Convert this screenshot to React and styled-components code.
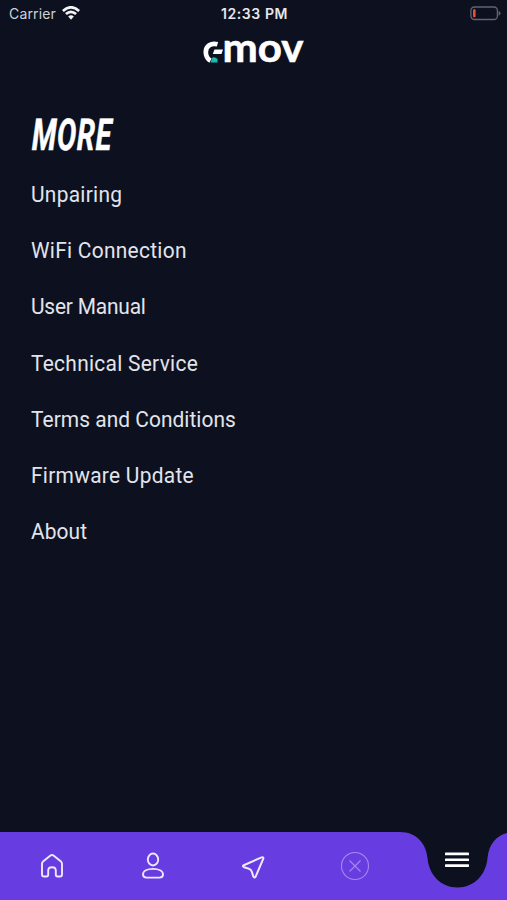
import React from 'react';
import styled, { createGlobalStyle } from 'styled-components';

const GlobalStyle = createGlobalStyle`
    * {
        box-sizing: border-box;
    }

    body {
        margin: 0;
        background: #0d111f;
    }
`;

const Screen = styled.div`
    display: flex;
    flex-direction: column;
    width: 100%;
    height: 100vh;
    overflow: hidden;
    background: #0d111f;
    color: #e2e4ec;
    font-family: Roboto, "Liberation Sans", sans-serif;
`;

const StatusBar = styled.div`
    display: grid;
    grid-template-columns: 1fr auto 1fr;
    align-items: center;
    height: 26px;
    padding: 0 6px 0 9px;
    font-family: Inter, "Liberation Sans", sans-serif;
`;

const Carrier = styled.div`
    display: flex;
    align-items: center;
    gap: 6px;
    font-size: 14px;
    letter-spacing: 0.15px;
    color: #cfd1d8;
`;

const Time = styled.div`
    margin-right: 1px;
    font-size: 14px;
    font-weight: 600;
    letter-spacing: 0.6px;
    color: #e6e7ec;
`;

const Battery = styled.svg`
    justify-self: end;
`;

const Header = styled.header`
    display: flex;
    justify-content: center;
    height: 50px;
`;

const LogoMark = styled.svg`
    overflow: visible;
`;

const Wordmark = styled.text`
    font-family: Lato, sans-serif;
    font-weight: 700;
    font-size: 41px;
    fill: #fff;
    stroke: #fff;
    stroke-width: 0.6px;
`;

const Main = styled.main`
    flex: 1;
    padding: 33px 31px 0;
`;

const Title = styled.h1`
    width: max-content;
    margin: 0;
    font-size: 44px;
    font-weight: 700;
    font-style: italic;
    line-height: 52px;
    letter-spacing: 1.3px;
    color: #fff;
    -webkit-text-stroke: 0.6px #fff;
    transform: translateX(1px) scaleX(0.65) skewX(-2deg);
    transform-origin: left;
`;

const Menu = styled.ul`
    margin: 6px 0 0;
    padding: 0;
    list-style: none;
`;

const MenuItem = styled.li`
    width: max-content;
    height: 56.2px;
    font-size: 22px;
    line-height: 55.6px;
    letter-spacing: ${props => props.$spacing}px;
    white-space: nowrap;
    transform: scaleX(0.95);
    transform-origin: left;
`;

const TabBar = styled.nav`
    position: relative;
    display: grid;
    grid-template-columns: repeat(5, 1fr);
    height: 68px;
    padding-left: 1px;

    &::before {
        content: '';
        position: absolute;
        inset: 0;
        background: #673de1;
        clip-path: path('M0 0H400C416 0 426 11 427.500 26C429 43 441 55.500 457.500 55.500C474 55.500 486 43 487.500 26C489 12 496 4 507 1V68H0Z');
    }
`;

const Tab = styled.a`
    position: relative;
    display: flex;
    justify-content: center;
    align-items: center;
    padding-bottom: ${props => (props.$active ? '12px' : '0')};
    padding-left: ${props => (props.$active ? '1px' : '0')};
    color: ${props => (props.$muted ? '#a38aef' : '#eee8ff')};
`;

const items = [
    { label: 'Unpairing', spacing: 0.3 },
    { label: 'WiFi Connection', spacing: 0.3 },
    { label: 'User Manual', spacing: -0.2 },
    { label: 'Technical Service', spacing: 0.3 },
    { label: 'Terms and Conditions', spacing: 0.05 },
    { label: 'Firmware Update', spacing: 0.3 },
    { label: 'About', spacing: 0.1 },
];

function WifiIcon() {
    return (
        <svg width="18" height="14" viewBox="0 0 18 14" fill="none" stroke="#f4f4f6" strokeWidth="2.700">
            <path d="M0.900 4.900Q9 -2.300 17.100 4.900" />
            <path d="M3.900 8.100Q9 3.700 14.100 8.100" />
            <path d="M6.200 10.500Q9 8.200 11.800 10.500L9 13.700Z" fill="#f4f4f6" stroke="none" />
        </svg>
    );
}

function BatteryIcon() {
    return (
        <Battery width="31" height="15" viewBox="0 0 31 15" fill="none">
            <rect x="0.900" y="1" width="26.500" height="12.500" rx="3.500" stroke="#62646f" strokeWidth="1.300" />
            <rect x="3" y="3.200" width="2.600" height="8" rx="1" fill="#ed4c35" />
            <path d="M28.600 4.800Q32.500 7.200 28.600 9.700Z" fill="#62646f" />
        </Battery>
    );
}

function Logo() {
    return (
        <LogoMark width="101" height="50" viewBox="0 -10 101 50">
            <path d="M14.500 8.300C8 6.500 2.800 10 2.800 16C2.800 20 4.500 23 7.500 24.600" fill="none" stroke="#fff" strokeWidth="4.700" />
            <path d="M11.500 13.500H20L18.500 18H9.800Z" fill="#fff" />
            <path d="M7.500 26.500L9.500 21.500Q12 20.500 14.500 23V26.500Z" fill="#20b9b0" />
            <Wordmark x="19.500" y="26.300" textLength="81" lengthAdjust="spacingAndGlyphs">mov</Wordmark>
        </LogoMark>
    );
}

function HomeIcon() {
    return (
        <svg width="24" height="26" viewBox="0 0 24 26" fill="none" stroke="currentColor" strokeWidth="1.900" strokeLinejoin="round">
            <path d="M2 10.800Q2 9.500 3 8.600L10.500 2.500Q12 1.400 13.500 2.500L21 8.600Q22 9.500 22 10.800V21.500Q22 23.500 20 23.500H17.500Q15.800 23.500 15.800 21.500V17.500C15.800 13.100 8.200 13.100 8.200 17.500V21.500Q8.200 23.500 6.500 23.500H4Q2 23.500 2 21.500Z" />
        </svg>
    );
}

function ProfileIcon() {
    return (
        <svg width="24" height="28" viewBox="0 0 24 28" fill="none" stroke="currentColor" strokeWidth="1.900">
            <ellipse cx="12" cy="7.500" rx="5.200" ry="6" />
            <path d="M2 22.500C2 18.800 6.500 16.900 12 16.900S22 18.800 22 22.500Q22 25.600 18.500 25.600H5.500Q2 25.600 2 22.500Z" />
        </svg>
    );
}

function LocationIcon() {
    return (
        <svg width="25" height="25" viewBox="0 0 26 26" fill="none" stroke="currentColor" strokeWidth="2.100" strokeLinejoin="round">
            <path d="M2.900 11.700L21.400 3.500Q23.800 2.800 23.100 5.100L15.200 23.500Q14 25.300 12.800 23.300L11.100 18Q10.300 16 8.300 15.400L3.200 13.700Q1 12.700 2.900 11.700Z" />
        </svg>
    );
}

function CloseIcon() {
    return (
        <svg width="30" height="30" viewBox="0 0 30 30" fill="none" stroke="currentColor" strokeWidth="1.100">
            <circle cx="15" cy="15" r="13.500" />
            <path d="M9.500 9.500L20.500 20.500M20.500 9.500L9.500 20.500" />
        </svg>
    );
}

function BurgerIcon() {
    return (
        <svg width="24" height="16" viewBox="0 0 24 16" fill="#fff">
            <rect y="0.600" width="24" height="2.700" rx="0.600" />
            <rect y="6.400" width="24" height="2.700" rx="0.600" />
            <rect y="12.200" width="24" height="2.700" rx="0.600" />
        </svg>
    );
}

function App() {
    return (
        <Screen>
            <GlobalStyle />
            <StatusBar>
                <Carrier>Carrier <WifiIcon /></Carrier>
                <Time>12:33 PM</Time>
                <BatteryIcon />
            </StatusBar>
            <Header>
                <Logo />
            </Header>
            <Main>
                <Title>MORE</Title>
                <Menu>
                    {items.map(item => (
                        <MenuItem key={item.label} $spacing={item.spacing}>{item.label}</MenuItem>
                    ))}
                </Menu>
            </Main>
            <TabBar>
                <Tab><HomeIcon /></Tab>
                <Tab><ProfileIcon /></Tab>
                <Tab><LocationIcon /></Tab>
                <Tab $muted><CloseIcon /></Tab>
                <Tab $active><BurgerIcon /></Tab>
            </TabBar>
        </Screen>
    )
}

export default App
